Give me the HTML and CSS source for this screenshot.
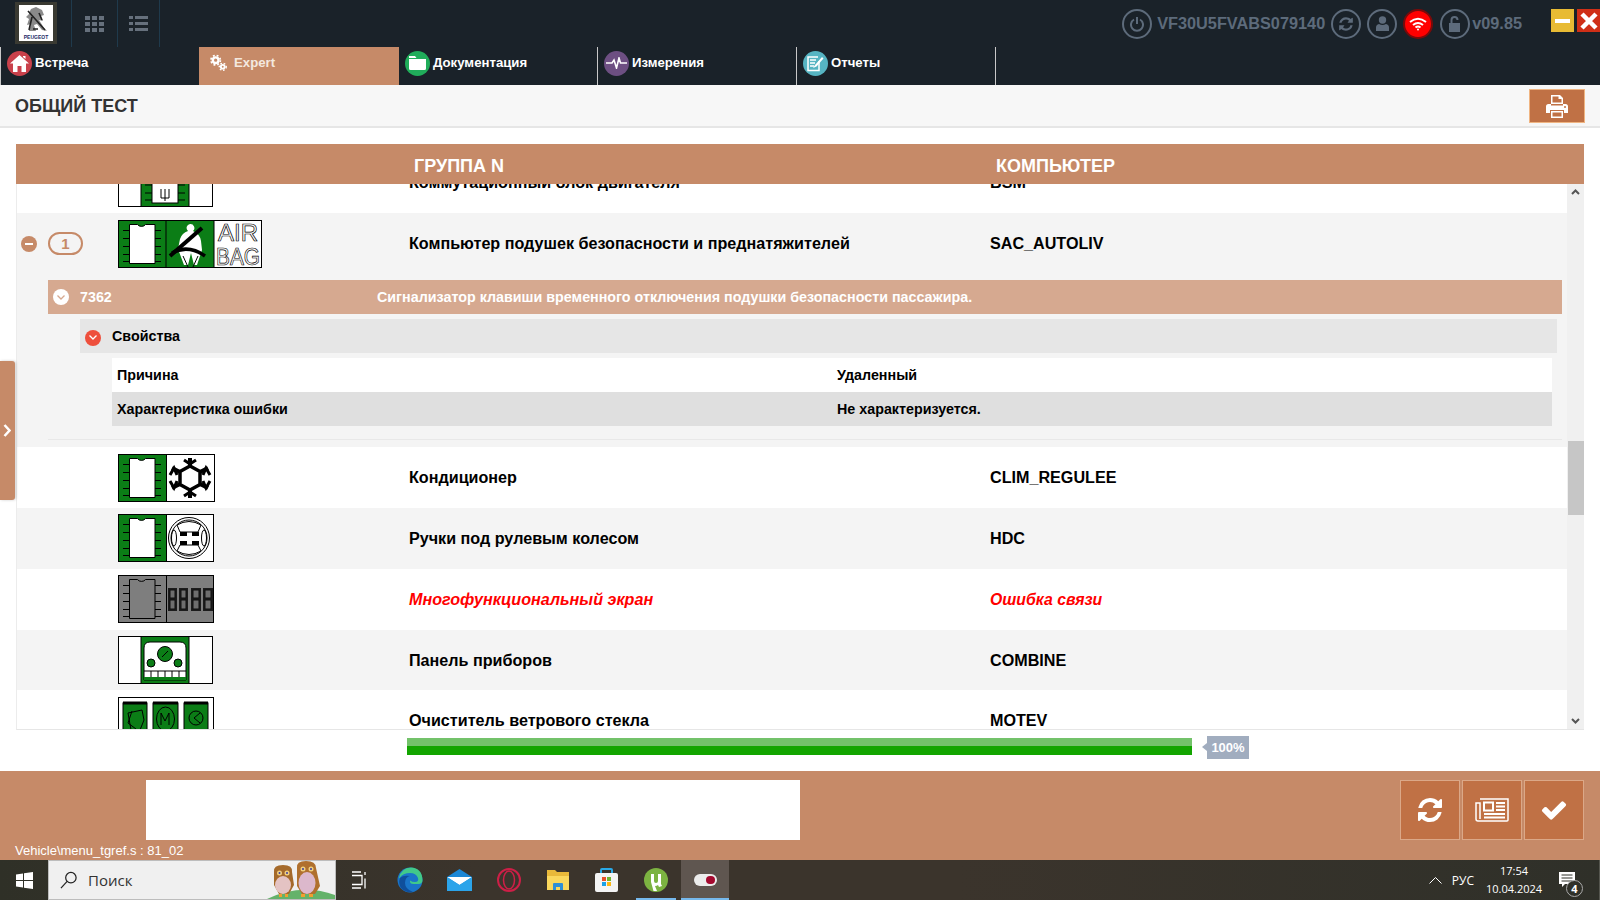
FILE: index.html
```html
<!DOCTYPE html>
<html lang="ru">
<head>
<meta charset="utf-8">
<title>Общий тест</title>
<link rel="stylesheet" href="styles.css">
</head>
<body>
<svg class="defs" width="0" height="0">
  <symbol id="chip" viewBox="0 0 48 48">
    <rect width="48" height="48" fill="currentColor"/>
    <path d="M11.500 4.500h8a4.500 3.500 0 0 0 8 0h9.500v39h-25.500z" fill="var(--body)" stroke="#000"/>
    <path d="M5 10.500h6M5 18.500h6M5 26.500h6M5 34.500h6M5 41.500h6M37 10.500h6M37 18.500h6M37 26.500h6M37 34.500h6M37 41.500h6" stroke="#000"/>
  </symbol>
</svg>

<header class="top">
  <div class="top-row">
    <div class="logo-cell">
      <div class="logo">
        <svg width="34" height="36" viewBox="0 0 34 36">
          <rect width="34" height="36" fill="#fff"/>
          <path d="M12 4l5-2 6 3 2 5-3 1 2 5-4-1 5 8 3 3-5-1-5-6-3 1 2 6H10l2-7-4 1 2-6-3-2 3-3 1-3z" fill="#8a8a8a"/>
          <path d="M9 6l17 19M13 12l-3 13M20 8l3 7M14 24h5" stroke="#222" stroke-width="1.600" fill="none"/>
          <text x="17" y="33.500" class="logo-text" text-anchor="middle">PEUGEOT</text>
        </svg>
      </div>
    </div>
    <div class="top-tool">
      <svg width="19" height="16" viewBox="0 0 19 16" fill="#66707c"><path d="M0 0h5v4H0zM7 0h5v4H7zM14 0h5v4h-5zM0 6h5v4H0zM7 6h5v4H7zM14 6h5v4h-5zM0 12h5v4H0zM7 12h5v4H7zM14 12h5v4h-5z"/></svg>
    </div>
    <div class="top-tool top-tool-narrow">
      <svg width="19" height="15" viewBox="0 0 19 15" fill="#66707c"><path d="M0 0h4v3H0zM6 0h13v3H6zM0 6h4v3H0zM6 6h13v3H6zM0 12h4v3H0zM6 12h13v3H6z"/></svg>
    </div>
    <div class="status">
      <span class="ring"><svg width="14" height="16" viewBox="0 0 14 16" fill="none" stroke="#5d6b7b" stroke-width="2"><path d="M4 3.500a6 6 0 1 0 6 0M7 1v7"/></svg></span>
      <span class="vin">VF30U5FVABS079140</span>
      <span class="ring ring-tight"><svg width="16" height="16" viewBox="0 0 1792 1792" fill="#5d6b7b"><path d="M1639 1056q0 5-1 7-64 268-268 434.500t-478 166.500q-146 0-282.500-55t-243.500-157l-129 129q-19 19-45 19t-45-19-19-45v-448q0-26 19-45t45-19h448q26 0 45 19t19 45-19 45l-137 137q71 66 161 102t187 36q134 0 250-65t186-179q11-17 53-117 8-23 30-23h192q13 0 22.500 9.500t9.500 22.500zm25-800v448q0 26-19 45t-45 19h-448q-26 0-45-19t-19-45 19-45l138-138q-148-137-349-137-134 0-250 65t-186 179q-11 17-53 117-8 23-30 23h-199q-13 0-22.500-9.500t-9.500-22.500v-7q65-268 270-434.500t480-166.500q146 0 284 55.500t245 156.500l130-129q19-19 45-19t45 19 19 45z"/></svg></span>
      <span class="ring ring-tight"><svg width="13" height="15" viewBox="0 0 13 15" fill="#5d6b7b"><circle cx="6.500" cy="4" r="3.700"/><path d="M0 15v-3.500q0-3 3-3.500 3.500 2 7 0 3 .5 3 3.500V15z"/></svg></span>
      <span class="ring ring-red ring-tight"><svg width="18" height="14" viewBox="0 0 18 14" fill="none" stroke="#fff" stroke-width="2"><path d="M1 5q8-6.500 16 0M4 8q5-4 10 0M6.500 10.500q2.500-2 5 0"/><circle cx="9" cy="12.500" r="1" fill="#fff" stroke="none"/></svg></span>
      <span class="ring"><svg width="13" height="16" viewBox="0 0 13 16" fill="none"><rect y="7" width="11" height="9" fill="#5d6b7b"/><path d="M2.500 7V4q0-3 3-3t3 3" stroke="#5d6b7b" stroke-width="2"/></svg></span>
      <span class="vin version">v09.85</span>
      <div class="win-btns">
        <span class="win-btn win-min"><i class="min-bar"></i></span>
        <span class="win-btn win-close">
          <svg width="18" height="18" viewBox="0 0 18 18" stroke="#fff" stroke-width="4.500"><path d="M2 2l14 14M16 2L2 16"/></svg>
        </span>
      </div>
    </div>
  </div>
  <nav class="tabs">
    <a class="tab">
      <span class="tab-ico bg-red"><svg width="19" height="17" viewBox="0 0 19 17" fill="#fff"><path d="M9.500 0L19 8.500h-3V17h-4.500v-6h-4v6H3V8.500H0zM13 1h2.500v3L13 2z"/></svg></span>
      <span class="tab-label">Встреча</span>
    </a>
    <a class="tab tab-active">
      <span class="tab-ico"><svg width="17" height="18" viewBox="0 0 18 18" fill="none" stroke="#fff"><circle cx="6" cy="6" r="3" stroke-width="2.500"/><circle cx="6" cy="6" r="5" stroke-width="1.800" stroke-dasharray="2 2"/><circle cx="13.500" cy="13" r="2" stroke-width="2"/><circle cx="13.500" cy="13" r="3.700" stroke-width="1.500" stroke-dasharray="1.800 1.800"/></svg></span>
      <span class="tab-label">Expert</span>
    </a>
    <a class="tab">
      <span class="tab-ico bg-green"><svg width="17" height="14" viewBox="0 0 17 14" fill="#fff"><path d="M0 0h6l1.500 2H0zM0 3h17v9.500q0 1.500-1.500 1.500h-14Q0 14 0 12.500z"/></svg></span>
      <span class="tab-label">Документация</span>
    </a>
    <a class="tab">
      <span class="tab-ico bg-purple"><svg width="21" height="12" viewBox="0 0 21 12" fill="none" stroke="#fff" stroke-width="1.600"><path d="M0 6h6l2-3 2.500 8L13 1l1.500 5H21"/></svg></span>
      <span class="tab-label">Измерения</span>
    </a>
    <a class="tab">
      <span class="tab-ico bg-teal"><svg width="17" height="17" viewBox="0 0 17 17" fill="none" stroke="#fff"><path d="M12 6v9.500H1V2h10" stroke-width="1.500"/><path d="M3 5h6M3 8h5M3 11h4" stroke-width="1.400"/><path d="M6 13l2-3 7-8 1.500 1.500-7 8z" fill="#fff" stroke="none"/></svg></span>
      <span class="tab-label">Отчеты</span>
    </a>
  </nav>
</header>

<section class="title-bar">
  <h1 class="title">ОБЩИЙ ТЕСТ</h1>
  <button class="print-btn">
    <svg width="22" height="23" viewBox="0 0 22 23" fill="#fff"><path d="M5 0h9l3 3v6H5zM6.500 1.500v6h9V4h-3V1.500z"/><path d="M2.500 9H5v1.500h12V9h2.500Q22 9 22 11.500V18h-4v-3H4v3H0v-6.500Q0 9 2.500 9z"/><path d="M5 16h12v7H5z"/><path d="M6.500 17.500h9v4h-9z" fill="#c07145"/><circle cx="19" cy="12" r="1" fill="#c07145"/></svg>
  </button>
</section>

<main class="main">
  <div class="handle"><svg width="8" height="13" viewBox="0 0 8 13" fill="none" stroke="#fff" stroke-width="2.500"><path d="M1.500 1l5 5.500-5 5.500"/></svg></div>
  <div class="table">
    <div class="table-head">
      <span class="th-name">ГРУППА N</span>
      <span class="th-comp">КОМПЬЮТЕР</span>
    </div>
    <div class="table-body">
      <div class="list">
        <div class="row row-first">
          <div class="state"></div>
          <div class="ico-col">
            <svg class="ico" width="95" height="48" viewBox="0 0 95 48"><rect x=".5" y=".5" width="94" height="47" fill="#fff" stroke="#000"/><rect x="23" y="1" width="48" height="46" fill="#0b7d16"/><path d="M23 .5v47M71 .5v47" stroke="#000"/><rect x="34" y="4" width="26" height="40" fill="#fff" stroke="#000"/><path d="M43 30v9h8v-9M47 30v12" fill="none" stroke="#000"/><path d="M27 10h7M27 18h7M27 26h7M27 34h7M27 41h7M60 10h7M60 18h7M60 26h7M60 34h7M60 41h7" stroke="#000"/></svg>
          </div>
          <div class="name">Коммутационный блок двигателя</div>
          <div class="comp">BSM</div>
        </div>

        <div class="group">
          <div class="row row-plain">
            <div class="state">
              <span class="minus"><i class="minus-bar"></i></span>
              <span class="count">1</span>
            </div>
            <div class="ico-col">
              <svg class="ico ico-green" width="144" height="48" viewBox="0 0 144 48">
                <use href="#chip" width="48" height="48"/>
                <rect x="48" width="48" height="48" fill="#0b7d16"/>
                <path d="M72 4a4 4 0 0 1 3 7q7 3 8 10l1 9-5 15h-3l-3-12-3 12h-4l-6-16 2-10q2-6 8-8a4 4 0 0 1 2-7z" fill="#fff"/>
                <path d="M52 36L84 8" stroke="#000" stroke-width="4"/>
                <path d="M54 33q16-9 33 3" stroke="#000" stroke-width="3.500" fill="none"/>
                <path d="M65 36l5 11M80 36l-5 11" stroke="#000"/>
                <rect x="96.500" y=".5" width="47" height="47" fill="#fff"/>
                <text x="120" y="20.500" class="airbag" text-anchor="middle" textLength="40" lengthAdjust="spacingAndGlyphs">AIR</text>
                <text x="120" y="45" class="airbag" text-anchor="middle" textLength="44" lengthAdjust="spacingAndGlyphs">BAG</text>
                <rect x=".5" y=".5" width="143" height="47" fill="none" stroke="#000"/>
                <path d="M48 0v48M96 0v48" stroke="#000"/>
              </svg>
            </div>
            <div class="name">Компьютер подушек безопасности и преднатяжителей</div>
            <div class="comp">SAC_AUTOLIV</div>
          </div>
          <div class="fault">
            <span class="chev chev-white"><svg width="8" height="5" viewBox="0 0 8 5" fill="none" stroke="#d6a990" stroke-width="1.300"><path d="M.5.500L4 4 7.500.500"/></svg></span>
            <span class="fault-code">7362</span>
            <span class="fault-title">Сигнализатор клавиши временного отключения подушки безопасности пассажира.</span>
          </div>
          <div class="props-head">
            <span class="chev chev-red"><svg width="8" height="5" viewBox="0 0 8 5" fill="none" stroke="#fff" stroke-width="1.300"><path d="M.5.500L4 4 7.500.500"/></svg></span>
            <span>Свойства</span>
          </div>
          <div class="prop">
            <span class="prop-key">Причина</span>
            <span>Удаленный</span>
          </div>
          <div class="prop prop-alt">
            <span class="prop-key">Характеристика ошибки</span>
            <span>Не характеризуется.</span>
          </div>
          <div class="group-line"></div>
        </div>

        <div class="row">
          <div class="state"></div>
          <div class="ico-col">
            <svg class="ico ico-green" width="97" height="48" viewBox="0 0 97 48">
              <use href="#chip" width="48" height="48"/>
              <rect x="48" width="49" height="48" fill="#fff"/>
              <path d="M72 12l10 5.500v13L72 36l-10-5.500v-13z" fill="none" stroke="#000" stroke-width="3.500"/>
              <path d="M72 4v8M72 36v8M54 14l8 4M90 14l-8 4M54 34l8-4M90 34l-8-4" stroke="#000" stroke-width="4"/>
              <path d="M66 6l6 4 6-4M66 42l6-4 6 4M52 21l4-7 3 7M85 21l3-7 4 7M52 27l4 7 3-7M85 27l3 7 4-7" fill="none" stroke="#000" stroke-width="3"/>
              <rect x=".5" y=".5" width="96" height="47" fill="none" stroke="#000"/>
              <path d="M48.500 0v48" stroke="#000"/>
            </svg>
          </div>
          <div class="name">Кондиционер</div>
          <div class="comp">CLIM_REGULEE</div>
        </div>

        <div class="row row-alt row-up">
          <div class="state"></div>
          <div class="ico-col">
            <svg class="ico ico-green" width="96" height="48" viewBox="0 0 96 48">
              <use href="#chip" width="48" height="48"/>
              <rect x="48" width="48" height="48" fill="#fff"/>
              <g fill="none" stroke="#000">
                <circle cx="71" cy="24" r="20.500"/><circle cx="71" cy="24" r="18"/>
                <path d="M59 11q12-7 24 0l-3 7H62zM59 37q12 7 24 0l-3-6H62z"/>
                <ellipse cx="56" cy="24" rx="2.500" ry="8"/><ellipse cx="86" cy="24" rx="2.500" ry="8"/>
              </g>
              <path d="M62 18h7v4h-7zM74 18h7v4h-7zM62 27h7v4h-7zM74 27h7v4h-7z"/>
              <rect x=".5" y=".5" width="95" height="47" fill="none" stroke="#000"/>
              <path d="M48.500 0v48" stroke="#000"/>
            </svg>
          </div>
          <div class="name">Ручки под рулевым колесом</div>
          <div class="comp">HDC</div>
        </div>

        <div class="row row-up">
          <div class="state"></div>
          <div class="ico-col">
            <svg class="ico ico-grey" width="96" height="48" viewBox="0 0 96 48">
              <use href="#chip" width="48" height="48"/>
              <rect x="48" width="48" height="48" fill="#7e7e7e"/>
              <g fill="#1c1c1c">
                <rect x="50" y="13" width="9" height="23"/><rect x="61" y="13" width="9" height="23"/>
                <rect x="73" y="13" width="10" height="23"/><rect x="85" y="13" width="10" height="23"/>
              </g>
              <g fill="#6e6e6e" stroke="#111">
                <rect x="52" y="15" width="5" height="8"/><rect x="52" y="25" width="5" height="9"/>
                <rect x="63" y="15" width="5" height="8"/><rect x="63" y="25" width="5" height="9"/>
                <rect x="75" y="15" width="6" height="8"/><rect x="75" y="25" width="6" height="9"/>
                <rect x="87" y="15" width="6" height="8"/><rect x="87" y="25" width="6" height="9"/>
              </g>
              <rect x=".5" y=".5" width="95" height="47" fill="none" stroke="#000"/>
              <path d="M48.500 0v48" stroke="#000"/>
            </svg>
          </div>
          <div class="name name-err">Многофункциональный экран</div>
          <div class="comp name-err">Ошибка связи</div>
        </div>

        <div class="row row-alt row-up row-short">
          <div class="state"></div>
          <div class="ico-col">
            <svg class="ico" width="95" height="48" viewBox="0 0 95 48">
              <rect x=".5" y=".5" width="94" height="47" fill="#fff" stroke="#000"/>
              <rect x="23" y="1" width="48" height="46" fill="#0b7d16"/>
              <path d="M23 .5v47M71 .5v47" stroke="#000"/>
              <path d="M26 44V12q0-6 6-6h30q6 0 6 6v32z" fill="#fff" stroke="#000"/>
              <circle cx="47" cy="18" r="7.500" fill="#0b7d16" stroke="#000"/>
              <path d="M44 21l6-6" stroke="#000"/>
              <circle cx="33" cy="27" r="4" fill="#0b7d16" stroke="#000"/>
              <circle cx="60" cy="27" r="4" fill="#0b7d16" stroke="#000"/>
              <path d="M26 35h42M33 35v6M40 35v6M47 35v6M54 35v6M61 35v6" stroke="#000"/>
              <rect x="26" y="41" width="42" height="3" fill="#0b7d16"/>
            </svg>
          </div>
          <div class="name">Панель приборов</div>
          <div class="comp">COMBINE</div>
        </div>

        <div class="row">
          <div class="state"></div>
          <div class="ico-col">
            <svg class="ico" width="96" height="48" viewBox="0 0 96 48">
              <rect x=".5" y=".5" width="95" height="47" fill="#fff" stroke="#000"/>
              <g fill="#0b7d16" stroke="#000">
                <rect x="5" y="6" width="24" height="42"/><rect x="35" y="6" width="25" height="42"/><rect x="66" y="6" width="24" height="42"/>
              </g>
              <path d="M5 6h24M35 6h25M66 6h24" stroke="#000" stroke-width="3"/>
              <g fill="none" stroke="#000">
                <path d="M10 16l14-3 2 10-4 10H13zM14 14l-4 12 8 6"/>
                <ellipse cx="47.500" cy="22" rx="9" ry="12"/><path d="M43 28V16l4 8 4-8v12"/>
                <circle cx="78" cy="21" r="7"/><path d="M82 16l-6 5 6 5"/>
              </g>
            </svg>
          </div>
          <div class="name">Очиститель ветрового стекла</div>
          <div class="comp">MOTEV</div>
        </div>
      </div>
      <div class="scrollbar">
        <svg class="arrow" width="9" height="6" viewBox="0 0 9 6" fill="none" stroke="#555" stroke-width="2"><path d="M1 5l3.500-3.500L8 5"/></svg>
        <div class="track-a"></div>
        <div class="thumb"></div>
        <div class="track-b"></div>
        <svg class="arrow" width="9" height="6" viewBox="0 0 9 6" fill="none" stroke="#555" stroke-width="2"><path d="M1 1l3.500 3.500L8 1"/></svg>
      </div>
    </div>
  </div>
  <div class="progress-row">
    <div class="progress"><div class="progress-top"></div><div class="progress-bottom"></div></div>
    <div class="percent">100%</div>
  </div>
</main>

<footer class="footer">
  <div class="footer-row">
    <div class="msg-box"></div>
    <div class="actions">
      <button class="act"><svg width="28" height="28" viewBox="0 0 1792 1792" fill="#fff"><path d="M1639 1056q0 5-1 7-64 268-268 434.500t-478 166.500q-146 0-282.500-55t-243.500-157l-129 129q-19 19-45 19t-45-19-19-45v-448q0-26 19-45t45-19h448q26 0 45 19t19 45-19 45l-137 137q71 66 161 102t187 36q134 0 250-65t186-179q11-17 53-117 8-23 30-23h192q13 0 22.500 9.500t9.500 22.500zm25-800v448q0 26-19 45t-45 19h-448q-26 0-45-19t-19-45 19-45l138-138q-148-137-349-137-134 0-250 65t-186 179q-11 17-53 117-8 23-30 23h-199q-13 0-22.500-9.500t-9.500-22.500v-7q65-268 270-434.500t480-166.500q146 0 284 55.500t245 156.500l130-129q19-19 45-19t45 19 19 45z"/></svg></button>
      <button class="act"><svg width="34" height="24" viewBox="0 0 34 24" fill="none" stroke="#fff" stroke-width="1.500"><path d="M5 1h28v21q0 1-1 1H3q-2 0-2-2V5h4v16"/><rect x="9" y="4.500" width="9" height="8" stroke-width="2"/><path d="M21 5h9M21 8.500h9M21 12h9M9 16h21M9 19.500h21" stroke-width="2"/></svg></button>
      <button class="act"><svg width="28" height="28" viewBox="0 0 1792 1792" fill="#fff"><path d="M1671 566q0 40-28 68l-724 724-136 136q-28 28-68 28t-68-28l-136-136-362-362q-28-28-28-68t28-68l136-136q28-28 68-28t68 28l294 295 656-657q28-28 68-28t68 28l136 136q28 28 28 68z"/></svg></button>
    </div>
  </div>
  <div class="build">Vehicle\menu_tgref.s : 81_02</div>
</footer>

<div class="taskbar">
  <div class="start"><svg width="17" height="17" viewBox="0 0 17 17" fill="#fff"><path d="M0 2.500l7-1v6.500H0zM8 1.300L17 0v8H8zM0 9h7v6.500l-7-1zM8 9h9v8l-9-1.300z"/></svg></div>
  <div class="search">
    <svg width="18" height="18" viewBox="0 0 19 19" fill="none" stroke="#222" stroke-width="1.300"><circle cx="11.500" cy="7" r="5.500"/><path d="M7.500 11L1 18"/></svg>
    <span class="search-text">Поиск</span>
    <svg class="owls" width="92" height="40" viewBox="0 0 92 40">
      <path d="M24 40q34-16 68-4v4z" fill="#64b26a"/>
      <path d="M31 13q-1-7 9-7t9 7l2 13-5 9H36l-5-9z" fill="#a56a2b"/>
      <ellipse cx="40" cy="26" rx="8" ry="9" fill="#e4c3c3"/>
      <circle cx="36.500" cy="14" r="2.500" fill="#f0d080"/><circle cx="44" cy="14" r="2.500" fill="#f0d080"/>
      <circle cx="36.500" cy="14" r="1" fill="#3c3ca0"/><circle cx="44" cy="14" r="1" fill="#3c3ca0"/>
      <path d="M36 35h3v3h-3zM42 35h3v3h-3z" fill="#f0a030"/>
      <g transform="translate(-2 0)">
        <path d="M56 9q-1-7 9-7t10 7l4 18-5 8H61l-5-8z" fill="#b0702e"/>
        <ellipse cx="66" cy="24" rx="8.500" ry="11" fill="#dcb8cc"/>
        <circle cx="62" cy="10" r="2.500" fill="#f0d080"/><circle cx="70" cy="10" r="2.500" fill="#f0d080"/>
        <circle cx="62" cy="10" r="1" fill="#3c3ca0"/><circle cx="70" cy="10" r="1" fill="#3c3ca0"/>
        <path d="M60 35h4v3h-4zM68 35h4v3h-4z" fill="#f0a030"/>
      </g>
    </svg>
  </div>
  <div class="task-apps">
    <span class="task"><svg width="18" height="18" viewBox="0 0 18 18" fill="none" stroke="#fff" stroke-width="1.300"><path d="M1 1h9M1 17h9M1 4.500h10v9H1M14 1v3M14 7.500v10" /></svg></span>
    <span class="task task-gap"><svg width="26" height="26" viewBox="0 0 26 26"><circle cx="13" cy="13" r="12.500" fill="#1a75c9"/><path d="M2 11Q4 1 14 .5 25 1 25.500 13q0 4-4 4h-5q-4 0-3.500-3.500 2 1.500 5 1.500 4 0 3-4-2-5-8-5-7 0-10.500 5z" fill="#41c98a"/><path d="M13 9q-5 1-5 7 0 6 8 9-8 1-12-4-3-5-1-10 3-3 10-2z" fill="#0f4f9c"/></svg></span>
    <span class="task task-gap"><svg width="25" height="22" viewBox="0 0 25 22"><path d="M0 8L12.500 0 25 8v14H0z" fill="#1b87d6"/><path d="M0 8h25L12.500 16z" fill="#fff"/><path d="M0 22V8l12.500 8L25 8v14z" fill="#2ba4ea"/></svg></span>
    <span class="task task-gap"><svg width="24" height="24" viewBox="0 0 24 24" fill="none" stroke="#cd1f47"><ellipse cx="12" cy="12" rx="11" ry="11" stroke-width="2"/><ellipse cx="12" cy="12" rx="5.500" ry="9" stroke-width="1.500"/></svg></span>
    <span class="task task-gap"><svg width="22" height="20" viewBox="0 0 22 20"><path d="M0 0h8l2 2h12v18H0z" fill="#e9b93a"/><path d="M0 6h22v14H0z" fill="#fbd85d"/><path d="M6 20v-6q0-1 1-1h8q1 0 1 1v6h-3v-3H9v3z" fill="#2f8fd6"/></svg></span>
    <span class="task task-gap"><svg width="23" height="24" viewBox="0 0 23 24"><path d="M6 6V2q0-1 1-1h9q1 0 1 1v4" fill="none" stroke="#29a9e8" stroke-width="2"/><rect y="5" width="23" height="19" rx="2" fill="#f4f4f4"/><rect x="7" y="9" width="4" height="4" fill="#e8512a"/><rect x="12" y="9" width="4" height="4" fill="#6fb52e"/><rect x="7" y="14" width="4" height="4" fill="#19a1e8"/><rect x="12" y="14" width="4" height="4" fill="#fbb714"/></svg></span>
    <span class="task task-gap task-line"><svg width="24" height="24" viewBox="0 0 24 24"><circle cx="12" cy="12" r="12" fill="#7cb341"/><path d="M7 6h3v7q0 2 2 2t2-2V6h3v6q0 3 0 4l1 2-3 1-1-2q-1 1-3 1l2 5H9.500L7 14z" fill="#fff"/></svg></span>
    <span class="task-open">
      <svg width="23" height="12" viewBox="0 0 23 12"><rect width="23" height="12" rx="6" fill="#ececec"/><rect x="12" y="2" width="9" height="8" rx="4" fill="#a4092f"/></svg>
    </span>
  </div>
  <div class="tray">
    <svg width="13" height="8" viewBox="0 0 13 8" fill="none" stroke="#fff"><path d="M.5 7.500l6-6 6 6"/></svg>
    <span class="lang">РУС</span>
    <div class="clock"><span>17:54</span><span>10.04.2024</span></div>
    <div class="notify">
      <svg width="16" height="16" viewBox="0 0 16 16"><path d="M0 0h16v12H6l-3 3v-3H0z" fill="#fff"/><path d="M2.500 3h11M2.500 6h11M2.500 9h11" stroke="#2f3029"/></svg>
      <span class="notify-count">4</span>
    </div>
  </div>
</div>
</body>
</html>
```

FILE: styles.css
```css
* { box-sizing: border-box; }
html, body { margin: 0; height: 100%; }
body {
  width: 1600px;
  height: 900px;
  overflow: hidden;
  display: flex;
  flex-direction: column;
  font-family: "Liberation Sans", Arial, sans-serif;
  background: #fff;
  color: #000;
}
.defs { position: absolute; }
svg { display: block; flex: none; }
.ico-green { color: #0b7d16; --body: #fff; }
.ico-grey { color: #7e7e7e; --body: #7e7e7e; }
.airbag { font: 24px "Liberation Sans", sans-serif; fill: #fff; stroke: #000; stroke-width: .7px; }

/* header */
.top { height: 85px; background: #1a2229; flex: none; display: flex; flex-direction: column; }
.top-row { height: 47px; display: flex; align-items: stretch; }
.logo-cell { width: 72px; padding: 2px 0 3px 15px; border-right: 1px solid #1f3a4c; }
.logo { width: 42px; height: 42px; background: #3a3a32; display: flex; align-items: center; justify-content: center; }
.logo-text { font: bold 5px "Liberation Sans", sans-serif; fill: #1a2a66; }
.top-tool { width: 46px; display: flex; align-items: center; justify-content: center; border-right: 1px solid #1f3a4c; }
.top-tool-narrow { width: 42px; }
.status { flex: 1; display: flex; align-items: center; justify-content: flex-end; }
.ring {
  width: 30px; height: 30px; border-radius: 50%;
  border: 2px solid #5d6b7b;
  display: flex; align-items: center; justify-content: center;
  margin-left: 7px;
}
.ring-tight { margin-left: 6px; }
.ring-red { background: #f00; border-color: #7a0a0a; }
.vin { color: #5d6b7b; font-weight: bold; font-size: 16.300px; margin-left: 5px; }
.version { margin-left: 2px; }
.win-btns { display: flex; gap: 3px; margin-left: 29px; margin-top: -6px; }
.win-btn { width: 23px; height: 23px; display: flex; align-items: center; justify-content: center; }
.win-min { background: #e8bb34; }
.min-bar { width: 15px; height: 4px; background: #fff; }
.win-close { background: #cf2f17; }
.tabs { height: 38px; display: flex; }
.tab {
  width: 199px;
  display: flex; align-items: center; gap: 3px;
  padding: 0 0 6px 6px;
  color: #fff; font-weight: bold; font-size: 13.200px;
  border-right: 1px solid #c8c8c8;
}
.tab-label { margin-top: -2px; }
.tab:first-child { border-left: 1px solid #c8c8c8; border-right: 0; }
.tab:nth-child(2) { width: 200px; }
.tab-active { background: #c68a68; border-right: 0; color: #f4e8df; gap: 7px; padding-left: 11px; }
.tab-ico { width: 25px; height: 25px; border-radius: 50%; display: flex; align-items: center; justify-content: center; }
.tab-active .tab-ico { width: 17px; }
.bg-red { background: #c9414b; }
.bg-green { background: #20ad5a; }
.bg-purple { background: #6d4f82; }
.bg-teal { background: #56b4c2; }

/* title */
.title-bar {
  height: 43px; flex: none;
  background: #f7f7f7; border-bottom: 2px solid #e6e6e6;
  display: flex; align-items: center; justify-content: space-between;
  padding: 1px 15px 0;
}
.title { margin: 0; font-size: 18px; color: #333; font-weight: bold; }
.print-btn {
  width: 56px; height: 34px; padding: 0;
  background: #c07145; border: 1px solid #f0b582;
  display: flex; align-items: center; justify-content: center;
}

/* main */
.main { flex: 1; position: relative; display: flex; flex-direction: column; padding-top: 16px; min-height: 0; }
.handle {
  position: absolute; left: 0; top: 233px;
  width: 15px; height: 139px;
  background: #c68a68; border-radius: 0 3px 3px 0;
  box-shadow: 1px 0 3px rgba(0,0,0,.2);
  display: flex; align-items: center; justify-content: center;
  padding-right: 1px;
}
.table { margin-left: 16px; width: 1568px; height: 586px; display: flex; flex-direction: column; flex: none; }
.table-head {
  height: 40px; flex: none; background: #c68a68; color: #fff;
  font-size: 18px; font-weight: bold;
  display: flex; align-items: center;
  padding-top: 4px;
}
.th-name { margin-left: 398px; width: 582px; }
.table-body { flex: 1; min-height: 0; display: flex; border-bottom: 1px solid #e6e6e6; border-left: 1px solid #ececec; }
.list { flex: 1; min-width: 0; overflow: hidden; }
.row { height: 61px; display: flex; align-items: center; background: #fff; }
.row-first { margin-top: -32px; }
.row-plain { background: transparent; }
.row-alt { background: #f4f4f4; }
.row-short { height: 60px; }
.row-up .ico-col { margin-top: -1px; }
.state { width: 101px; flex: none; display: flex; align-items: center; padding-left: 4px; gap: 11px; }
.ico-col { width: 291px; flex: none; }
.name { width: 581px; flex: none; font-size: 16.150px; font-weight: bold; }
.comp { font-size: 16.150px; font-weight: bold; }
.name-err { color: #f00; font-style: italic; }
.comp.name-err { font-size: 15.800px; }
.minus { width: 16px; height: 16px; border-radius: 50%; background: #c68a68; display: flex; align-items: center; justify-content: center; }
.minus-bar { width: 8px; height: 2px; background: #fff; }
.count {
  width: 35px; height: 23px; border: 2px solid #c68a68; border-radius: 12px;
  display: flex; align-items: center; justify-content: center;
  color: #c68a68; font-weight: bold; font-size: 15px;
}
.group { background: #f4f4f4; height: 234px; padding-bottom: 8px; }
.fault {
  margin: 6px 5px 0 31px; height: 34px;
  background: #d6a990; color: #fff; font-weight: bold; font-size: 14.300px;
  display: flex; align-items: center; padding-left: 5px;
}
.chev { width: 16px; height: 16px; border-radius: 50%; display: flex; align-items: center; justify-content: center; flex: none; }
.chev-white { background: #fff; }
.chev-red { background: #ee4f3c; margin-top: 3px; }
.fault-code { margin-left: 11px; width: 297px; flex: none; }
.props-head {
  margin: 5px 10px 0 63px; height: 34px;
  background: #e6e6e6; font-weight: bold; font-size: 14.300px;
  display: flex; align-items: center; padding-left: 5px; gap: 11px;
}
.prop {
  margin: 0 15px 0 95px; height: 34px;
  background: #fff; font-weight: bold; font-size: 14.300px;
  display: flex; align-items: center; padding-left: 5px;
}
.props-head + .prop { margin-top: 5px; }
.prop-alt { background: #dfdfdf; }
.prop-key { width: 720px; flex: none; }
.group-line { margin: 13px 5px 0 31px; height: 1px; background: #e8e8e8; }
.scrollbar {
  width: 17px; flex: none; background: #f0f0f0;
  display: flex; flex-direction: column; align-items: center;
  padding: 5px 0;
}
.track-a { height: 246px; flex: none; }
.thumb { width: 16px; height: 74px; background: #c6c6c6; flex: none; }
.track-b { flex: 1; }

/* progress */
.progress-row { flex: 1; display: flex; align-items: center; padding: 0 0 9px 407px; }
.progress { width: 785px; height: 17px; display: flex; flex-direction: column; }
.progress-top { height: 8px; background: #73c26a; }
.progress-bottom { flex: 1; background: #13a500; }
.percent {
  position: relative;
  margin: 2px 0 0 15px; width: 42px; height: 23px;
  background: #a1adbf; color: #fff; font-weight: bold; font-size: 13px;
  display: flex; align-items: center; justify-content: center;
}
.percent::before {
  content: ""; position: absolute; left: -5px; top: 7px;
  border-style: solid; border-width: 4.500px 5px 4.500px 0;
  border-color: transparent #a1adbf transparent transparent;
}

/* footer */
.footer { height: 89px; flex: none; background: #c68a68; padding-top: 9px; display: flex; flex-direction: column; }
.footer-row { height: 60px; display: flex; justify-content: space-between; padding: 0 16px 0 146px; }
.msg-box { width: 654px; background: #fff; }
.actions { display: flex; gap: 2px; }
.act {
  width: 60px; height: 60px; padding: 0;
  background: #c07145; border: 1px solid #dba888;
  display: flex; align-items: center; justify-content: center;
}
.build { padding: 3px 0 0 15px; color: #fff; font-size: 13px; }

/* taskbar */
.taskbar {
  height: 40px; flex: none;
  background: linear-gradient(90deg, #2f3027 0%, #3b342c 30%, #3b342c 60%, #2f3029 100%);
  display: flex; align-items: stretch; color: #fff;
}
.start { width: 48px; display: flex; align-items: center; justify-content: center; }
.search {
  width: 288px; background: #f0f0f0; position: relative;
  border: 1px solid #bdbdbd;
  display: flex; align-items: center; padding-left: 11px; overflow: hidden;
}
.search-text { margin-left: 10px; font: 15px "Open Sans", sans-serif; color: #333; }
.owls { position: absolute; right: 0; bottom: 0; }
.task-apps { display: flex; align-items: center; padding-left: 15px; height: 40px; }
.task { width: 18px; height: 40px; display: flex; align-items: center; justify-content: center; }
.task-gap { width: 49px; }
.task:nth-child(2) { margin-left: 16px; }
.task:nth-child(3) { margin-left: 1px; }
.task:nth-child(7) { margin-left: 5px; }
.task-line { box-shadow: inset 0 -2px 0 #76b9ed; width: 40px; margin: 0 4px; }
.task-open {
  width: 48px; height: 40px; background: #5f5650;
  box-shadow: inset 0 -2px 0 #76b9ed;
  display: flex; align-items: center; justify-content: center;
  margin-left: 1px;
}
.tray { margin-left: auto; display: flex; align-items: center; padding-right: 16px; border-right: 1px solid #55564f; }
.lang { margin-left: 10px; font: 12px "Open Sans", sans-serif; }
.clock {
  display: flex; flex-direction: column; align-items: center; gap: 2px;
  margin-left: 9px; width: 62px;
  font: 11px/16px "Open Sans", sans-serif;
}
.notify { position: relative; margin-left: 14px; width: 24px; height: 26px; padding-top: 5px; }
.notify-count {
  position: absolute; left: 7px; top: 13px;
  width: 17px; height: 17px; border-radius: 50%; border: 1px solid #aaa; background: #2f3029;
  display: flex; align-items: center; justify-content: center;
  font: bold 11px "Open Sans", sans-serif;
}
```
